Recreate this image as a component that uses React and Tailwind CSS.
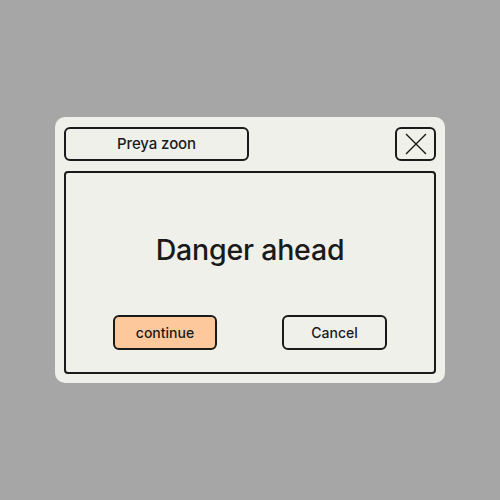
export default function App() {
    return (
        <div className="w-[500px] h-[500px] bg-[#a6a6a6] flex items-center justify-center font-['Inter',sans-serif] text-[#1a1a1a]">
            <div className="w-[390px] h-[266px] bg-[#f0f0eb] rounded-[10px] p-[9px] pt-[10px] flex flex-col gap-[10px]">
                <div className="flex justify-between h-[34px]">
                    <div className="w-[185px] h-full border-2 border-[#1a1a1a] rounded-[6px] flex items-center justify-center text-[15px] font-medium tracking-[-0.1px]">
                        Preya zoon
                    </div>
                    <div className="w-[41px] h-full border-2 border-[#1a1a1a] rounded-[6px] flex items-center justify-center">
                        <svg width="22" height="22" viewBox="0 0 22 22" fill="none" stroke="#1a1a1a" strokeWidth="1.4">
                            <path d="M1 1 L21 21 M21 1 L1 21" />
                        </svg>
                    </div>
                </div>
                <div className="flex-1 border-2 border-[#1a1a1a] rounded-[4px] flex flex-col items-center">
                    <div className="mt-[63px] text-[28.5px] font-medium tracking-[-0.2px] leading-none">Danger ahead</div>
                    <div className="mt-[50px] w-full flex justify-between pl-[47px] pr-[47px]">
                        <button className="w-[104px] h-[35px] bg-[#fdc99c] border-2 border-[#1a1a1a] rounded-[6px] text-[14px] font-medium">
                            continue
                        </button>
                        <button className="w-[105px] h-[35px] border-2 border-[#1a1a1a] rounded-[6px] text-[14px] font-medium">
                            Cancel
                        </button>
                    </div>
                </div>
            </div>
        </div>
    );
}
